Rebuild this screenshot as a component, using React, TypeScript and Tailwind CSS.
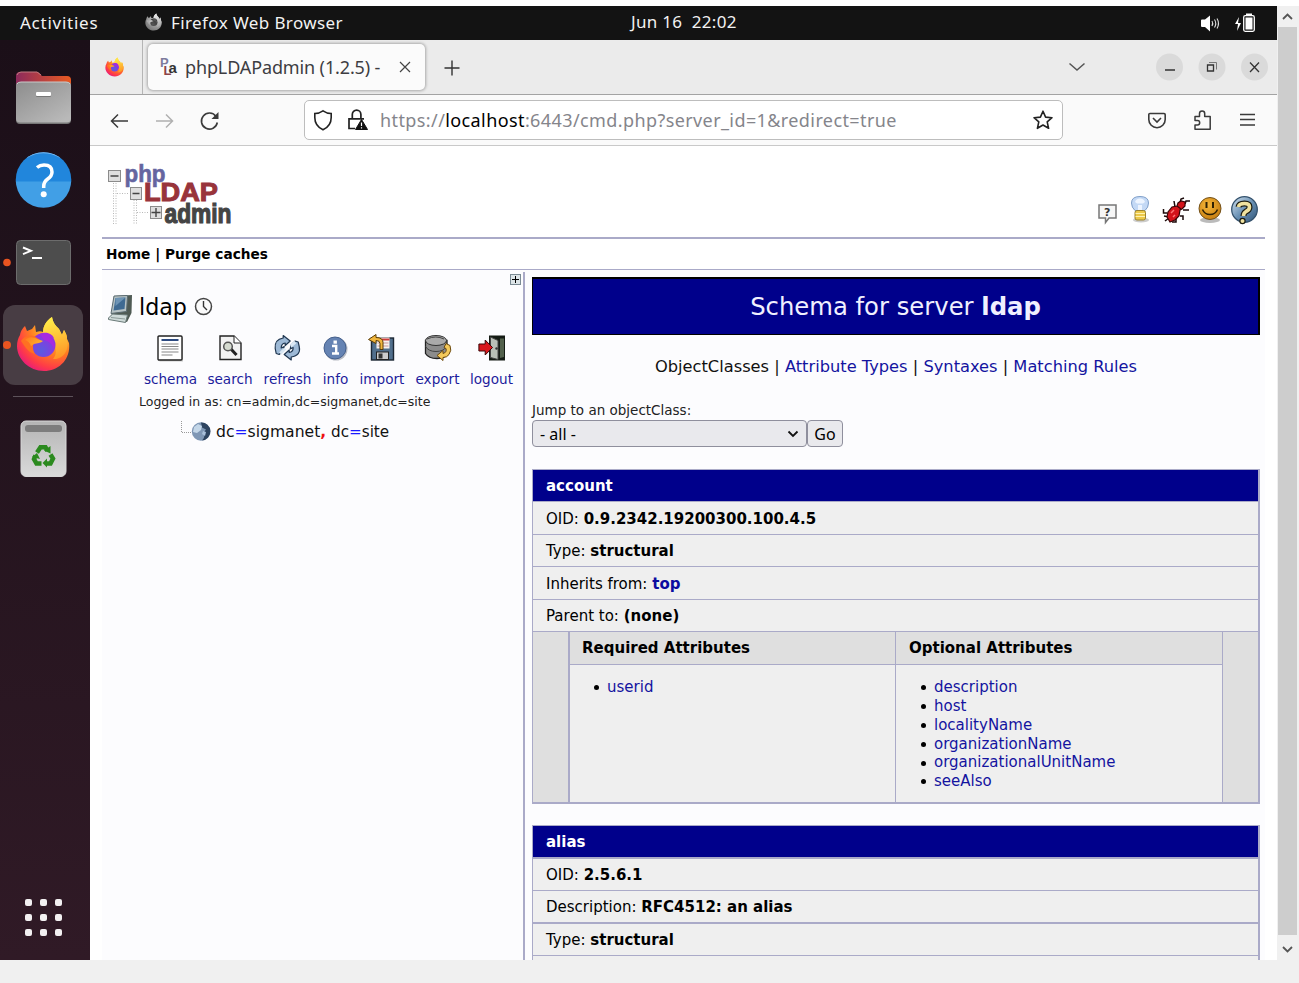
import React from "react";

const DV = "font-['DejaVu_Sans',sans-serif]";

function Firefox({ className, mono }: { className: string; mono?: boolean }) {
  const id = React.useId().replace(/[^a-zA-Z0-9]/g, "");
  return (
    <svg className={className} viewBox="0 0 54 56">
      <defs>
        <radialGradient id={id + "a"} cx="0.78" cy="0.15" r="1">
          <stop offset="0" stopColor={mono ? "#e8e8e8" : "#fff44f"} />
          <stop offset="0.3" stopColor={mono ? "#c8c8c8" : "#ffb52b"} />
          <stop offset="0.55" stopColor={mono ? "#a0a0a0" : "#ff7a22"} />
          <stop offset="0.8" stopColor={mono ? "#888888" : "#ff3b47"} />
          <stop offset="1" stopColor={mono ? "#707070" : "#e31587"} />
        </radialGradient>
        <radialGradient id={id + "b"} cx="0.4" cy="0.75" r="0.8">
          <stop offset="0" stopColor={mono ? "#555555" : "#5a5be0"} />
          <stop offset="1" stopColor={mono ? "#333333" : "#9a2be0"} />
        </radialGradient>
        <linearGradient id={id + "c"} x1="0" y1="0" x2="1" y2="0.4">
          <stop offset="0" stopColor={mono ? "#999999" : "#ff7b1c"} />
          <stop offset="1" stopColor={mono ? "#dddddd" : "#ffb030"} />
        </linearGradient>
        <linearGradient id={id + "d"} x1="0.3" y1="0" x2="0.5" y2="1">
          <stop offset="0" stopColor={mono ? "#f0f0f0" : "#fff04a"} />
          <stop offset="1" stopColor={mono ? "#aaaaaa" : "#ff9626"} />
        </linearGradient>
      </defs>
      <path
        d="M4 19C5 14 7 12 9 10l2 5 5-2 3-4 1 7c3-1 5-1 7 0 0-6 3-11 9-15 1 6 4 9 7 12l3 6 2-5c2 4 3 5 3 9l2 4c2 16-10 28-25 28S1 43 1 30c0-4 1-8 3-11z"
        fill={"url(#" + id + "a)"}
      />
      <path
        d="M27 17c0-7 3-12 9-16 1 6 4 9 7 12l3 6 2-5c2 4 3 5 3 9 3 13-6 21-14 20 4-4 4-13-1-17l1-5c-4 0-7-1-10-4z"
        fill={"url(#" + id + "d)"}
      />
      <circle cx="27.500" cy="29" r="12" fill={"url(#" + id + "b)"} />
      <path d="M24 18c4-2 11-2 14 4l-5-1c5 3 7 8 5 12-2-6-6-8-10-9z" fill={mono ? "#555555" : "#a62ae0"} />
      <path
        d="M5 25c3-5 8-6 13-5l6 4c-3 1-7 3-7 6 0 2 0 5 2 8l-5-2c-4-3-6-7-9-11z"
        fill={mono ? "#aaaaaa" : "#ff7022"}
      />
      <path d="M9 24c4-4 8-3 12-1l6 2c-2 2-6 2-9 3l-3 2c-1-3-3-5-6-6z" fill={"url(#" + id + "c)"} />
    </svg>
  );
}

function Dock() {
  return (
    <aside className="relative flex h-[920px] w-[90px] shrink-0 flex-col overflow-hidden bg-linear-to-b from-[#1b0f18] to-[#301a26]">
      <div className="flex h-[31px] shrink-0" />
      <svg className="ml-[15px] h-[54px] w-[57px] shrink-0" viewBox="15 71 57 54">
        <defs>
          <linearGradient id="fold" x1="0" x2="1">
            <stop offset="0" stopColor="#8c2a5c" />
            <stop offset="1" stopColor="#e95a22" />
          </linearGradient>
          <linearGradient id="foldf" x1="0" x2="0.8" y2="1">
            <stop offset="0" stopColor="#8d8d8d" />
            <stop offset="1" stopColor="#b9b9b9" />
          </linearGradient>
        </defs>
        <path d="M16 100V76q0-4 4-4h17q2 0 3 2l2 2h25q4 0 4 4v20z" fill="url(#fold)" />
        <path d="M17 75q1-3 4-3h16l4 3" stroke="#c07a80" fill="none" />
        <rect x="16" y="82" width="55" height="42" rx="4" fill="#777" />
        <rect x="16" y="82" width="55" height="40.500" rx="4" fill="url(#foldf)" />
        <path d="M17 84q1-2 4-2h45q3 0 4 2" stroke="#c9c9c9" fill="none" />
        <rect x="36" y="92.500" width="15" height="4.500" rx="1" fill="#777" />
        <rect x="36" y="92" width="15" height="4" rx="1" fill="#fff" />
      </svg>
      <svg className="mt-[26px] ml-[15px] h-[58px] w-[57px] shrink-0" viewBox="15 151 57 58">
        <defs>
          <clipPath id="hc">
            <circle cx="43.500" cy="180" r="27.800" />
          </clipPath>
        </defs>
        <g clipPath="url(#hc)">
          <rect x="15" y="151" width="57" height="31" fill="#2186dc" />
          <rect x="15" y="181.500" width="57" height="30" fill="#419fe6" />
          <path d="M27 157q16-9 33 0" stroke="#7ab9ee" fill="none" strokeWidth="1.500" />
        </g>
        <path d="M37 167.500q3-2.500 7-2.500 8 0 8 7 0 4-4.300 7-4 2.700-4 7.500v1.500" stroke="#fff" strokeWidth="3.500" fill="none" />
        <circle cx="43.700" cy="194.300" r="3" fill="#fff" />
      </svg>
      <svg className="mt-[30px] ml-[3px] h-[48px] w-[69px] shrink-0" viewBox="3 239 69 48">
        <circle cx="7" cy="262.500" r="3.800" fill="#e95420" />
        <rect x="16.500" y="240.500" width="54" height="44" rx="4" fill="#4d4d4d" stroke="#6c6c6c" />
        <path d="M23 247.500l8 3.300-8 3.300" stroke="#fff" strokeWidth="1.900" fill="none" />
        <path d="M32 258h10" stroke="#fff" strokeWidth="2" />
      </svg>
      <div className="mt-[18px] ml-[3px] flex h-[80px] w-[80px] shrink-0 items-center rounded-[12px] bg-[#483d44]">
        <i className="block h-[8px] w-[8px] shrink-0 rounded-full bg-[#e95420]" />
        <Firefox className="-mt-[2px] ml-[5px] h-[56px] w-[54px]" />
      </div>
      <div className="mt-[11px] ml-[13px] h-px w-[60px] shrink-0 bg-[#5d525a]" />
      <svg className="mt-[23px] ml-[20px] h-[58px] w-[47px] shrink-0" viewBox="20 420 47 58">
        <defs>
          <linearGradient id="tr" x1="0" x2="0" y1="0" y2="1">
            <stop offset="0" stopColor="#b4b4b4" />
            <stop offset="1" stopColor="#dadada" />
          </linearGradient>
        </defs>
        <rect x="21" y="421" width="45" height="55.500" rx="5" fill="url(#tr)" stroke="#d8d8d8" />
        <rect x="25" y="425" width="37" height="7" rx="3" fill="#7d7d7d" />
        <g fill="none" stroke="#2b8a1e" strokeWidth="4.500">
          <path d="M37 452.500l3.500-5.200h5l2 3.500" />
          <path d="M50.500 454.500l2.500 4-2.500 5h-4" />
          <path d="M41.500 463.500h-5l-2.500-4.500 1.500-3.500" />
        </g>
        <g fill="#2b8a1e">
          <path d="M50.500 446v7.500l-6.500-3z" />
          <path d="M47 458.500v9l-4.500-4.500z" />
          <path d="M32 457l5-4 3 6z" />
        </g>
      </svg>
      <div className="mt-auto mb-[24px] ml-[25px] grid w-[37px] grid-cols-3 gap-x-[8px] gap-y-[8px]">
        {Array.from({ length: 9 }, (_, i) => (
          <i key={i} className="block h-[7px] w-[7px] rounded-[2px] bg-[#f2f0f1]" />
        ))}
      </div>
    </aside>
  );
}

function TopBar() {
  return (
    <div className="flex h-[34px] items-center bg-[#131313] text-[17px] text-[#f2f2f2]">
      <span className="-mt-px ml-[20px] w-[125px] shrink-0 tracking-[0.75px] whitespace-pre">Activities</span>
      <Firefox mono className="-mt-[2px] h-[18px] w-[17px]" />
      <span className="-mt-px ml-[9px] w-[460px] shrink-0 tracking-[0.4px] whitespace-pre">Firefox Web Browser</span>
      <span className="-mt-[2px] shrink-0 tracking-[0.3px] whitespace-pre">Jun 16  22:02</span>
      <svg className="-mt-px mr-[20px] ml-auto h-[22px] w-[58px]" viewBox="1200 11 58 22">
        <path d="M1202 19.500q0-1 1-1h3l5-4v16l-5-4.500h-3q-1 0-1-1z" fill="#fff" />
        <path d="M1213 20q1.500 2.500 0 5M1215.500 18.500q2.500 4 0 8M1218 17.500q3 5 0 10" stroke="#ddd" fill="none" strokeWidth="1.100" />
        <path d="M1240 16l-4 7h3l-1 7 4-8h-3z" fill="#fff" />
        <rect x="1244.700" y="14.700" width="10.600" height="15.600" rx="1.500" stroke="#fff" strokeWidth="1.300" fill="none" />
        <rect x="1246.500" y="16.500" width="7" height="12" fill="#fff" />
        <rect x="1247" y="12.500" width="6" height="2" fill="#fff" />
      </svg>
    </div>
  );
}

function TabBar() {
  return (
    <div className="flex h-[55px] items-center border-b border-[#a3a3a3] bg-[#ebebeb] text-[#3d3d42]">
      <div className="flex h-[54px] w-[53px] shrink-0 items-center border-r border-[#b5b5b5]">
        <Firefox className="ml-[15px] h-[20px] w-[19px]" />
      </div>
      <div className="ml-[5px] flex h-[46px] w-[277px] shrink-0 items-center rounded-[5px] bg-[#fbfbfb] shadow-[0_0_3px_1px_rgba(0,0,0,0.28)]">
        <svg className="ml-[11px] h-[22px] w-[20px] shrink-0" viewBox="0 0 20 22" fontFamily="Liberation Sans, sans-serif" fontWeight="700">
          <text x="1" y="11" fontSize="13" fill="#7d7c9d">P</text>
          <text x="4.500" y="19" fontSize="13" fill="#8c4448">L</text>
          <text x="9.500" y="16.500" fontSize="15" fill="#333">a</text>
        </svg>
        <span className="mt-px ml-[6px] w-[196px] shrink-0 text-[18px] tracking-[-0.13px] whitespace-pre">phpLDAPadmin (1.2.5) -</span>
        <svg className="ml-[18px] h-[12px] w-[12px]" viewBox="0 0 12 12">
          <path d="M1 1l10 10M11 1L1 11" stroke="#444" strokeWidth="1.200" />
        </svg>
      </div>
      <svg className="mt-[2px] ml-[19px] h-[16px] w-[16px]" viewBox="0 0 16 16">
        <path d="M8 .5v15M.5 8h15" stroke="#333" strokeWidth="1.400" />
      </svg>
      <svg className="ml-auto h-[10px] w-[18px]" viewBox="0 0 18 10">
        <path d="M1.500 1.500L9 8l7.500-6.500" stroke="#555" strokeWidth="1.500" fill="none" />
      </svg>
      <svg className="mr-[8px] ml-[69px] h-[28px] w-[114px]" viewBox="1155 53.500 114 28">
        <g fill="#dadada">
          <circle cx="1169.500" cy="67.500" r="13.500" />
          <circle cx="1212" cy="67.500" r="13.500" />
          <circle cx="1254.500" cy="67.500" r="13.500" />
        </g>
        <path d="M1165 70.500h10M1250 63l9 9.500M1259 63l-9 9.500" stroke="#333" strokeWidth="1.300" />
        <path d="M1207.500 65.500h6v6h-6z" stroke="#333" strokeWidth="1.300" fill="none" />
        <path d="M1209 63h7.500v7" stroke="#777" strokeWidth="1" fill="none" />
      </svg>
    </div>
  );
}

function NavBar() {
  return (
    <div className="flex h-[51px] items-center border-b border-[#c9c9c9] bg-[#fafafa]">
      <svg className="mt-[2px] ml-[20px] h-[20px] w-[20px] shrink-0" viewBox="110 111 20 20" fill="none" stroke="#3a3a3a" strokeWidth="1.500">
        <path d="M111.500 121H128M118 114.500l-6.500 6.500 6.500 6.500" />
      </svg>
      <svg className="mt-[2px] ml-[25px] h-[20px] w-[20px] shrink-0" viewBox="155 111 20 20" fill="none" stroke="#b0b0b0" strokeWidth="1.500">
        <path d="M156 121h16.500M166 114.500l6.500 6.500-6.500 6.500" />
      </svg>
      <svg className="mt-[2px] ml-[24px] h-[22px] w-[22px] shrink-0" viewBox="199 110 22 22">
        <path d="M216 116.500a8 8 0 1 0 1.300 6" fill="none" stroke="#3a3a3a" strokeWidth="1.600" />
        <path d="M218.500 112v7h-7z" fill="#3a3a3a" />
      </svg>
      <div className="ml-[83px] flex h-[40px] w-[759px] shrink-0 items-center rounded-[5px] border border-[#bdbdbd] bg-white">
        <svg className="ml-[8px] h-[22px] w-[20px] shrink-0" viewBox="313 109 20 22" fill="none" stroke="#222" strokeWidth="1.600">
          <path d="M323 110.800q4 2.700 8.200 2.700v4q0 8.500-8.200 12.300-8.200-3.800-8.200-12.300v-4q4.200 0 8.200-2.700z" />
        </svg>
        <svg className="ml-[14px] h-[22px] w-[22px] shrink-0" viewBox="347 109 22 22">
          <path d="M352.300 118v-3.500a4.300 4.300 0 0 1 8.600 0v3.500M355 128.500h-6v-9.700h15" fill="none" stroke="#222" strokeWidth="1.700" />
          <path d="M361.500 119.500l6 10h-12z" fill="#111" stroke="#111" />
          <path d="M361.500 122.500v3.500M361.500 127.200v1.300" stroke="#fff" strokeWidth="1.200" />
        </svg>
        <span className="ml-[11px] text-[18px] tracking-[0.4px] whitespace-pre text-[#85858b]">
          https://<span className="text-black">localhost</span>:6443/cmd.php?server_id=1&amp;redirect=true
        </span>
        <svg className="mr-[8px] ml-auto h-[22px] w-[22px] shrink-0" viewBox="0 0 22 22">
          <path d="M11 2.200l2.600 5.900 6.400.6-4.800 4.200 1.400 6.400L11 16l-5.600 3.300 1.400-6.400L2 8.700l6.400-.6z" fill="none" stroke="#222" strokeWidth="1.600" strokeLinejoin="round" />
        </svg>
      </div>
      <svg className="mt-px ml-[84px] h-[20px] w-[20px] shrink-0" viewBox="0 0 20 20" fill="none" stroke="#3a3a3a" strokeWidth="1.600">
        <path d="M3 2.500h14q1.200 0 1.200 1.200V8.500a8.200 8.200 0 0 1-16.400 0V3.700Q1.800 2.500 3 2.500z" />
        <path d="M6 7l4 4 4-4" />
      </svg>
      <svg className="ml-[26px] h-[22px] w-[20px] shrink-0" viewBox="1193 109 20 22" fill="none" stroke="#3a3a3a" strokeWidth="1.500">
        <path d="M1195 116.500h4.500v-3a2.600 2.600 0 0 1 5.200 0v3h5.500v12.700h-15.200v-4.200h2.500a2.200 2.200 0 0 0 0-4.400h-2.500z" strokeLinejoin="round" />
      </svg>
      <svg className="ml-[26px] h-[20px] w-[18px] shrink-0" viewBox="1239 110 18 20">
        <path d="M1240 114.500h15M1240 119.500h15M1240 125h15" stroke="#3a3a3a" strokeWidth="1.400" />
      </svg>
    </div>
  );
}

function Logo() {
  return (
    <svg className="mt-[16px] ml-[6px] h-[72px] w-[130px] overflow-visible" viewBox="108 162 130 72" fontFamily="Liberation Sans, sans-serif" fontWeight="700">
      <g stroke="#b8b8b8" strokeDasharray="1 1.500" fill="none">
        <path d="M113.500 183v42M116 183v42M134 200v25M136.500 200v25M117 193.500h12M137 212.500h12" />
      </g>
      <g stroke="#8b8b8b" fill="#dedede">
        <rect x="108.500" y="170.500" width="12" height="11" />
        <rect x="130.500" y="187.500" width="11" height="12" />
        <rect x="150.500" y="206.500" width="11" height="12" />
      </g>
      <path d="M110.500 176h8M132.500 193.500h7" stroke="#444" strokeWidth="1.600" />
      <path d="M151.500 212.500h9M156 208v9" stroke="#444" strokeWidth="1.400" />
      <text x="124.500" y="182" fontSize="23" fill="#6565a0" stroke="#6565a0" strokeWidth=".6" textLength="41" lengthAdjust="spacingAndGlyphs">php</text>
      <text x="144" y="200.500" fontSize="25.500" fill="#98343b" stroke="#98343b" strokeWidth="1" textLength="74" lengthAdjust="spacingAndGlyphs">LDAP</text>
      <text x="164.500" y="222.500" fontSize="28" fill="#444" stroke="#444" strokeWidth="1.200" textLength="67" lengthAdjust="spacingAndGlyphs">admin</text>
    </svg>
  );
}

function HeaderIcons() {
  return (
    <svg className="mt-[48px] mr-[5px] ml-auto h-[32px] w-[164px]" viewBox="1096 194 164 32">
      <defs>
        <radialGradient id="sm" cx=".4" cy=".35" r=".7">
          <stop offset="0" stopColor="#f8b83a" />
          <stop offset="1" stopColor="#c47c10" />
        </radialGradient>
        <linearGradient id="qq" x2="1" y2="1">
          <stop offset="0" stopColor="#d6e4f0" />
          <stop offset=".5" stopColor="#6b92b5" />
          <stop offset="1" stopColor="#2f5478" />
        </linearGradient>
      </defs>
      <path d="M1099 205h17v13h-7l-3.500 4.500V218h-6.500z" fill="#f6f6f6" stroke="#777" strokeWidth="1.500" />
      <text x="1104" y="216" fontSize="11" fontWeight="700" fontFamily="DejaVu Sans" fill="#333">?</text>
      <ellipse cx="1141" cy="220" rx="8" ry="2.500" fill="#ccc" />
      <path d="M1135 210.500q-3.500-3-3.500-7.500 0-6.500 8.500-6.500t8.500 6.500q0 4.500-3.500 7.500z" fill="#c4d9f5" stroke="#7f9fc9" />
      <path d="M1135 202q1-3.500 5-3.500t5 3.500l-2 1.500h-6zM1138 205h4v5h-4z" fill="#eef5ff" />
      <rect x="1135" y="210.500" width="10.500" height="9.500" rx="2" fill="#ecc94a" stroke="#9b8330" />
      <path d="M1135.500 213.500h9.500M1135.500 216.500h9.500" stroke="#fff3b0" />
      <g stroke="#1c0b0b" strokeWidth="1.500" fill="none">
        <path d="M1163.500 209v4h4M1164 216l5 1M1165 221l4-3M1172 222h4v-4M1180 216h3v4M1183 210h6M1175 207l-1-6M1180 203l1-4 3-1M1185 204l1-3h4" />
      </g>
      <path d="M1167 217l1-5 4-5 5-1 1-3 3-2 4 1v4l-3 3-2 1-1 6-4 4-5 2z" fill="#d3131a" stroke="#3c0406" strokeWidth="1.200" />
      <path d="M1171 213l3-3M1173 217l2-2" stroke="#ff7474" strokeWidth="1.500" />
      <path d="M1177 206l4 3" stroke="#3c0406" strokeWidth="1.200" />
      <ellipse cx="1210" cy="220" rx="10" ry="3" fill="#bbb" />
      <circle cx="1210" cy="208.500" r="11" fill="url(#sm)" stroke="#72501a" />
      <path d="M1206.500 202v6M1213 202v6" stroke="#2e2003" strokeWidth="2" />
      <path d="M1202.500 209.500q2 5 7.500 5t7.500-5" stroke="#2e2003" strokeWidth="1.500" fill="none" />
      <circle cx="1244.500" cy="209.500" r="12.800" fill="url(#qq)" stroke="#35536e" strokeWidth="1.300" />
      <path d="M1238.500 207q.5-3.500 6-3.500 5 0 5 3.500 0 3-3.500 4.500-2.500 1.500-2.500 4.500" stroke="#1b1b10" strokeWidth="6" fill="none" />
      <path d="M1238.500 207q.5-3.500 6-3.500 5 0 5 3.500 0 3-3.500 4.500-2.500 1.500-2.500 4.500" stroke="#efe2a0" strokeWidth="3.600" fill="none" />
      <circle cx="1242.500" cy="221" r="2.600" fill="#efe2a0" stroke="#1b1b10" strokeWidth="1.200" />
    </svg>
  );
}

const tools: [string, string, string, React.ReactNode][] = [
  [
    "schema", "w-[53px]", "1.5 -0.5 28 28",
    <g key="a">
      <rect x="4" y="3" width="23.500" height="24" fill="#ccc" />
      <rect x="2.500" y="1.500" width="24" height="24" rx="1" fill="#fff" stroke="#222" strokeWidth="1.400" />
      <path d="M6 5.500h17" stroke="#2d4a80" strokeWidth="2" />
      <path d="M6 9.500h17M6 12h17M6 14.500h17M6 17.500h17M6 20.500h11" stroke="#888" strokeWidth="1.200" />
    </g>,
  ],
  [
    "search", "w-[46px]", "-0.5 -0.5 28 28",
    <g key="b">
      <path d="M3.500 1.500h14l7 7v16.500h-21z" fill="#f2f2f2" stroke="#222" strokeWidth="1.400" />
      <path d="M17.500 1.500v7h7" fill="#fff" stroke="#222" />
      <path d="M14 14l6 6.500" stroke="#222" strokeWidth="3" />
      <circle cx="11.500" cy="12" r="4.300" fill="#d5dbd0" stroke="#555" strokeWidth="1.500" />
    </g>,
  ],
  [
    "refresh", "w-[49px]", "0.8 -0.5 28 28",
    <g key="c" strokeLinejoin="round" fill="#9db9d6" stroke="#1f3650" strokeWidth="1.200">
      <path d="M2 14q-1-9 8-10.500V1l7 5.500-5 4.500V8.500q-4 .5-4 5l3-1.500-1 4-4 4-3-1z" />
      <path d="M26 12q2 9-8 10.500V25.500l-7-5.500 5-4.500V18q4-.5 4-5l-3 1.500 1-4 4-4 3 1z" />
      <path d="M6 18l5-5 2 2-5 5zM17 10l4-4 2 3-5 4z" fill="#dae8f4" stroke="none" />
    </g>,
  ],
  [
    "info", "w-[27px]", "0.5 -0.5 28 28",
    <g key="d">
      <circle cx="14.500" cy="14.500" r="11.500" fill="#b9bcc4" />
      <circle cx="13.500" cy="13.500" r="11" fill="#6583b3" stroke="#45608c" />
      <path d="M13.700 6v3.200" stroke="#fff" strokeWidth="3.400" />
      <path d="M10.500 11.500h4.200v7M10.500 19h7" stroke="#fff" strokeWidth="2.400" fill="none" />
    </g>,
  ],
  [
    "import", "w-[46px]", "0.5 -0.5 28 28",
    <g key="e">
      <rect x="4" y="3.500" width="22" height="22" fill="#516f8c" stroke="#1c2733" strokeWidth="1.400" />
      <rect x="9" y="3" width="13" height="11" fill="#f6f3f0" />
      <path d="M9 5h13" stroke="#cc3a3a" strokeWidth="2" />
      <path d="M10 8.500h11M10 11.500h11" stroke="#c99" />
      <rect x="9" y="17.500" width="12" height="7.500" fill="#ccc" stroke="#222" />
      <rect x="11" y="19" width="4" height="5" fill="#333" />
      <path d="M12.500 15V9q0-3-4-3V9L1 5l7.500-5v3q7 0 7 5v7z" fill="#f0b63d" stroke="#5a3d08" />
    </g>,
  ],
  [
    "export", "w-[45px]", "0 -0.5 28 28",
    <g key="f">
      <path d="M1.500 6v13q3 5 11.500 5t10-5V6z" fill="#8c8c8c" stroke="#222" strokeWidth="1.300" />
      <ellipse cx="12" cy="6" rx="10.500" ry="5" fill="#aaa" stroke="#333" />
      <path d="M1.500 12q3 5 10.500 5t10.500-5M3 4.500q9-4 17 0" stroke="#444" fill="none" />
      <path d="M22 9l4 2q2 5-1 9-2 3-6 3v3l-6-5 6-5v3q4-1 3-5l-2-1z" fill="#f4c95a" stroke="#6b480c" />
    </g>,
  ],
  [
    "logout", "w-[43px]", "0 -0.5 28 28",
    <g key="g">
      <rect x="11" y="1" width="16" height="25" fill="#141b14" />
      <path d="M22 4h4v18.500l-4 1z" fill="#52604c" />
      <path d="M12.500 2.500l7.500 3.500v19l-7.500-2z" fill="#b9bfb7" stroke="#444" />
      <circle cx="18.500" cy="14" r="1.200" fill="#333" />
      <path d="M.9 9.500h6.300v-4l7.300 7.500-7.300 7.500v-4H.9z" fill="#d8171d" stroke="#3c0606" />
    </g>,
  ],
];

function Tree() {
  return (
    <div className="flex w-[421px] shrink-0 flex-col">
      <div className="flex h-[16px] justify-end pt-[4px] pr-[1px]">
        <svg className="h-[12px] w-[12px]" viewBox="0 0 12 12">
          <rect x=".5" y=".5" width="10" height="10" fill="#dde5e8" stroke="#7b8b94" />
          <path d="M5.500 2v7M2 5.500h7" stroke="#000" />
        </svg>
      </div>
      <div className="flex h-[40px] items-center pl-[4px]">
        <svg className="mt-[5px] h-[30px] w-[28px]" viewBox="105 293 28 30">
          <path d="M113 295l18-1-.5 18-4.500 9-17-4 2-4z" fill="#4f5a54" />
          <path d="M113 295l13.500-.5-1 16-15.500 2z" fill="#b7c2c4" stroke="#5a6a70" />
          <path d="M114.500 297l10-.5-1 11.500-11 1.500z" fill="#3f6a92" />
          <path d="M114.500 297l10-.5-10 8.500z" fill="#6d93b4" />
          <path d="M107.500 317l4-4 15 1-2 7.500-17-3z" fill="#cfdad9" stroke="#6a7a78" />
          <path d="M110 316.500l14 1.500" stroke="#8c9a98" />
        </svg>
        <span className="mt-[3px] ml-[5px] text-[22.200px] whitespace-pre">ldap</span>
        <svg className="ml-[7px] h-[19px] w-[19px]" viewBox="0 0 19 19">
          <circle cx="9.500" cy="9.500" r="8" fill="#fafafa" stroke="#444" strokeWidth="1.500" />
          <path d="M9.500 4v5.500l3.500 3.500" stroke="#333" strokeWidth="1.400" fill="none" />
        </svg>
      </div>
      <div className="flex h-[66px] gap-[10px] pt-[8px] pl-[42px]">
        {tools.map(([name, w, vb, art]) => (
          <div key={name} className={"flex shrink-0 flex-col items-center " + w}>
            <svg className="h-[28px] w-[28px] shrink-0 overflow-visible" viewBox={vb}>{art}</svg>
            <a className="mt-[8px] flex h-[18px] items-center text-[13.600px] whitespace-pre text-[#1c1c9c]">{name}</a>
          </div>
        ))}
      </div>
      <div className="mt-[1px] flex h-[18px] items-center pl-[37px] text-[12.500px] whitespace-pre text-[#222]">
        Logged in as: cn=admin,dc=sigmanet,dc=site
      </div>
      <div className="mt-[9px] flex h-[24px] items-baseline pl-[79px]">
        <svg className="h-[24px] w-[30px] self-center" viewBox="181 420 30 24">
          <path d="M181.500 421v11M182 432.500h9" stroke="#999" strokeDasharray="1 1" fill="none" />
          <circle cx="201" cy="431.500" r="9.200" fill="#7f97b5" />
          <path d="M201 422.500a9 9 0 0 1 1 18q4-4 1-7l3-4-4-2z" fill="#2e4460" />
          <path d="M194 427l4-3 4 2-1 4-4 3-4-1z" fill="#c3d6e8" />
          <path d="M203 431l3 1-1 4-3-2z" fill="#a9c0da" />
        </svg>
        <span className="ml-[5px] w-[115px] text-[15.600px] leading-[25px] whitespace-pre text-[#111]">
          dc<b className="font-normal text-[#1a1aff]">=</b>sigmanet<b className="text-[#ee1111]">,</b>
        </span>
        <span className="text-[15.200px] leading-[25px] whitespace-pre text-[#111]">
          dc<b className="font-normal text-[#1a1aff]">=</b>site
        </span>
      </div>
    </div>
  );
}

function Row({ h, label, children, link }: { h: string; label: string; children: string; link?: boolean }) {
  return (
    <div className={"flex shrink-0 items-center border-[#aaaac8] bg-[#efefef] pt-[1.500px] pl-[13px] text-[15px] whitespace-pre " + h}>
      {label} <b className={link ? "text-[#0c0ca0]" : ""}>{children}</b>
    </div>
  );
}

function Attrs({ title, items, className, head, pad }: { title: string; items: string[]; className: string; head: string; pad: string }) {
  return (
    <div className={"flex shrink-0 flex-col border-[#aaaac8] " + className}>
      <div className={"flex h-[33px] items-center border-b border-[#aaaac8] bg-[#dfdfdf] pt-px text-[15px] font-bold " + head}>{title}</div>
      <ul className={"flex h-[137px] flex-col bg-[#efefef] pt-[13px] " + pad}>
        {items.map((t) => (
          <li key={t} className="flex h-[18.800px] items-center text-[15px] whitespace-pre text-[#1414a0]">
            <i className="mt-px mr-[8px] block h-[5px] w-[5px] rounded-full bg-black" />
            {t}
          </li>
        ))}
      </ul>
    </div>
  );
}

function Schema() {
  return (
    <div className="mt-[2px] flex min-w-0 flex-1 flex-col border-l-2 border-[#aaaac8] pt-[5px] pr-[5px] pl-[7px]">
      <h1 className="flex h-[58px] shrink-0 items-center justify-center border border-t-2 border-r-2 border-black bg-[#00008b] pt-[2px] text-[24.300px] whitespace-pre text-[#f0f0ff]">
        Schema for server <b>ldap</b>
      </h1>
      <div className="flex h-[65px] shrink-0 items-center justify-center text-[16.250px] whitespace-pre text-[#1414a0]">
        <span className="text-[#111]">ObjectClasses | </span>Attribute Types<span className="text-[#111]"> | </span>Syntaxes
        <span className="text-[#111]"> | </span>Matching Rules
      </div>
      <div className="flex h-[20px] shrink-0 items-center text-[13.500px] whitespace-pre text-[#222]">Jump to an objectClass:</div>
      <div className="flex h-[27px] shrink-0 font-['Noto_Sans',sans-serif] text-[16px] text-black">
        <div className="flex w-[275px] items-center rounded-[4px] border border-[#8f8f9d] bg-[#e9e9ed] pr-[7px] pl-[7px]">
          <span className="whitespace-pre">- all -</span>
          <svg className="ml-auto h-[8px] w-[12px]" viewBox="0 0 12 8">
            <path d="M1.500 1.500L6 6l4.500-4.500" stroke="#111" strokeWidth="1.800" fill="none" />
          </svg>
        </div>
        <div className="flex w-[36px] items-center justify-center rounded-[4px] border border-[#8f8f9d] bg-[#e9e9ed]">Go</div>
      </div>
      <section className="mt-[22px] flex shrink-0 flex-col border-t border-r-2 border-b-2 border-l border-[#aaaac8]">
        <div className="flex h-[32px] items-center border-b border-[#aaaac8] bg-[#00008b] pt-px pl-[13px] text-[15px] font-bold text-white">account</div>
        <Row h="h-[33px] border-b" label="OID:">0.9.2342.19200300.100.4.5</Row>
        <Row h="h-[32px] border-b" label="Type:">structural</Row>
        <Row h="h-[33px] border-b" label="Inherits from:" link>top</Row>
        <Row h="h-[32px] border-b" label="Parent to:">(none)</Row>
        <div className="flex bg-[#dfdfdf] pl-[35px]">
          <Attrs title="Required Attributes" className="w-[327px] border-l-2" head="pl-[12px]" pad="pl-[24px]" items={["userid"]} />
          <Attrs
            title="Optional Attributes"
            className="w-[328px] border-x"
            head="pl-[13px]"
            pad="pl-[25px]"
            items={["description", "host", "localityName", "organizationName", "organizationalUnitName", "seeAlso"]}
          />
        </div>
      </section>
      <section className="mt-[21px] flex shrink-0 flex-col border-t border-r-2 border-l border-[#aaaac8]">
        <div className="flex h-[33px] items-center border-b-2 border-[#aaaac8] bg-[#00008b] pt-px pl-[13px] text-[15px] font-bold text-white">alias</div>
        <Row h="h-[32px] border-b" label="OID:">2.5.6.1</Row>
        <Row h="h-[33px] border-b-2" label="Description:">RFC4512: an alias</Row>
        <Row h="h-[32px] border-b" label="Type:">structural</Row>
        <div className="h-[33px] bg-[#efefef]" />
      </section>
    </div>
  );
}

export default function App() {
  return (
    <div className="flex h-[983px] w-[1299px] flex-col overflow-hidden bg-[#f0f0f0] font-['Noto_Sans',sans-serif]">
      <div className="h-[6px] shrink-0 bg-white" />
      <div className="flex h-[954px] shrink-0">
        <div className="flex w-[1277px] shrink-0 flex-col">
          <TopBar />
          <div className="flex">
            <Dock />
            <div className="flex h-[920px] w-[1187px] flex-col overflow-hidden bg-white">
              <TabBar />
              <NavBar />
              <div className={"mx-[12px] flex h-[814px] flex-col overflow-hidden text-black " + DV}>
                <div className="flex h-[93px] shrink-0 border-b-2 border-[#aaaac8]">
                  <Logo />
                  <HeaderIcons />
                </div>
                <div className="flex h-[31px] shrink-0 items-center border-b border-[#aaaac8] pl-[4px] text-[13.700px] font-bold whitespace-pre">
                  Home | Purge caches
                </div>
                <div className="flex h-[690px] shrink-0 overflow-hidden bg-[#fcfcfe]">
                  <Tree />
                  <Schema />
                </div>
              </div>
            </div>
          </div>
        </div>
        <div className="ml-px flex w-[19px] shrink-0 flex-col items-center">
          <svg className="h-[21px] w-[19px] shrink-0" viewBox="0 0 19 21">
            <path d="M5 13l4.500-4.500L14 13" stroke="#555" strokeWidth="1.800" fill="none" />
          </svg>
          <div className="h-[908px] w-[19px] shrink-0 bg-[#cdcdcd]" />
          <svg className="h-[25px] w-[19px] shrink-0" viewBox="0 0 19 25">
            <path d="M5 12l4.500 4.500L14 12" stroke="#555" strokeWidth="1.800" fill="none" />
          </svg>
        </div>
      </div>
    </div>
  );
}
